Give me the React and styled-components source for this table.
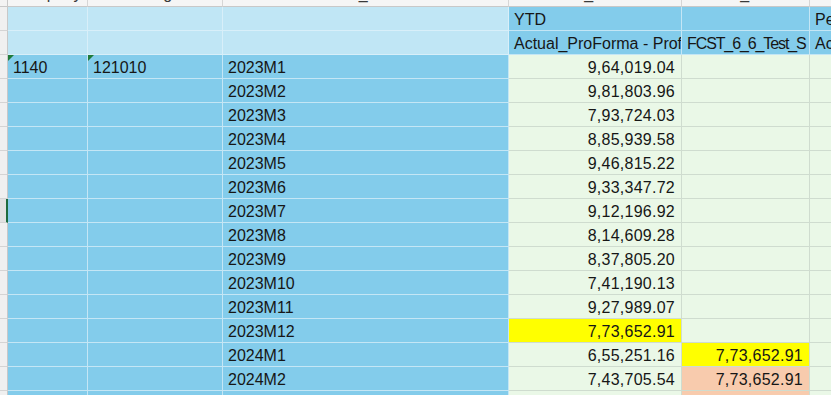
import React from 'react';
import styled, { createGlobalStyle } from 'styled-components';

const C = {
  pale: '#c0e6f5',
  paleLine: '#d8eff9',
  blue: '#83cceb',
  blueLine: '#c4e6f5',
  green: '#eaf8e7',
  greenLine: '#cfdccf',
  yellow: '#ffff00',
  salmon: '#f8cbad',
};

const GlobalStyle = createGlobalStyle`
  html, body { margin: 0; padding: 0; background: #ffffff; overflow: hidden; }
  body { font-family: "Liberation Sans", Arial, sans-serif; }
`;

const Sheet = styled.div`
  display: grid;
  grid-template-columns: 8px 80px 135px 286px 173px 128px 60px;
  grid-template-rows: 7px;
  grid-auto-rows: 24px;
  width: 831px;
  height: 395px;
  overflow: hidden;
  font-size: 16px;
  color: #161616;
`;

const Corner = styled.div`
  background: #f3f3f3;
  border-right: 1px solid #c8c8c8;
  border-bottom: 1px solid #c8c8c8;
  box-sizing: border-box;
`;

const ColHead = styled.div`
  display: flex;
  align-items: flex-end;
  padding: 0 0 3px 5px;
  background: #f5f5f5;
  border-right: 1px solid #d6d6d6;
  border-bottom: 1px solid #c8c8c8;
  box-sizing: border-box;
  overflow: hidden;
  white-space: nowrap;
  line-height: 18px;
  color: #3a3a3a;
  min-width: 0;
`;

const RowHead = styled.div`
  background: ${p => (p.$sel ? '#e2e2e2' : '#f0f0f0')};
  border-bottom: 1px solid #d4d4d4;
  border-right: ${p => (p.$sel ? '2px solid #1d6b3f' : '1px solid #c8c8c8')};
  box-sizing: border-box;
`;

const Cell = styled.div`
  position: relative;
  display: flex;
  align-items: flex-end;
  justify-content: ${p => (p.$right ? 'flex-end' : 'flex-start')};
  padding: ${p => (p.$right ? '0 6px 1px 0' : '0 0 1px 5px')};
  letter-spacing: ${p => p.$spacing || (p.$right ? '0.25px' : '0')};
  background: ${p => p.$bg};
  border-right: 1px solid ${p => p.$line};
  border-bottom: 1px solid ${p => p.$line};
  box-sizing: border-box;
  overflow: hidden;
  white-space: nowrap;
  line-height: 18px;
  min-width: 0;
`;

const ErrorMark = styled.span`
  position: absolute;
  top: 0;
  left: 0;
  width: 0;
  height: 0;
  border-top: 6px solid #1f7a3a;
  border-right: 6px solid transparent;
`;

const topLabels = ['Company', 'Accounting', 'Fiscal Date Period_M', 'Measures_View', 'Version_Test', 'Period'];

const months = [
  ['2023M1', '9,64,019.04'],
  ['2023M2', '9,81,803.96'],
  ['2023M3', '7,93,724.03'],
  ['2023M4', '8,85,939.58'],
  ['2023M5', '9,46,815.22'],
  ['2023M6', '9,33,347.72'],
  ['2023M7', '9,12,196.92'],
  ['2023M8', '8,14,609.28'],
  ['2023M9', '8,37,805.20'],
  ['2023M10', '7,41,190.13'],
  ['2023M11', '9,27,989.07'],
  ['2023M12', '7,73,652.91', C.yellow],
  ['2024M1', '6,55,251.16', null, '7,73,652.91', C.yellow],
  ['2024M2', '7,43,705.54', null, '7,73,652.91', C.salmon],
  ['', '', null, '', C.salmon],
];

export default function App() {
  return (
    <>
      <GlobalStyle />
      <Sheet>
        <Corner />
        {topLabels.map((t, i) => (
          <ColHead key={i}>
            <span>{t}</span>
          </ColHead>
        ))}

        <RowHead />
        <Cell $bg={C.pale} $line={C.paleLine} />
        <Cell $bg={C.pale} $line={C.paleLine} />
        <Cell $bg={C.pale} $line={C.paleLine} />
        <Cell $bg={C.blue} $line={C.blueLine}>YTD</Cell>
        <Cell $bg={C.blue} $line={C.blueLine} />
        <Cell $bg={C.blue} $line={C.blueLine}>Pe</Cell>

        <RowHead />
        <Cell $bg={C.pale} $line={C.paleLine} />
        <Cell $bg={C.pale} $line={C.paleLine} />
        <Cell $bg={C.pale} $line={C.paleLine} />
        <Cell $bg={C.blue} $line={C.blueLine}>Actual_ProForma - Prof</Cell>
        <Cell $bg={C.blue} $line={C.blueLine} $spacing="-1.1px">FCST_6_6_Test_S</Cell>
        <Cell $bg={C.blue} $line={C.blueLine}>Ac</Cell>

        {months.map(([m, ytd, ytdBg, fc, fcBg], i) => (
          <React.Fragment key={i}>
            <RowHead $sel={i === 6} />
            <Cell $bg={C.blue} $line={C.blueLine}>
              {i === 0 && <ErrorMark />}
              {i === 0 ? '1140' : ''}
            </Cell>
            <Cell $bg={C.blue} $line={C.blueLine}>
              {i === 0 && <ErrorMark />}
              {i === 0 ? '121010' : ''}
            </Cell>
            <Cell $bg={C.blue} $line={C.blueLine}>{m}</Cell>
            <Cell $right $bg={ytdBg || C.green} $line={C.greenLine}>{ytd}</Cell>
            <Cell $right $bg={fcBg || C.green} $line={C.greenLine}>{fc || ''}</Cell>
            <Cell $bg={C.green} $line={C.greenLine} />
          </React.Fragment>
        ))}
      </Sheet>
    </>
  );
}
